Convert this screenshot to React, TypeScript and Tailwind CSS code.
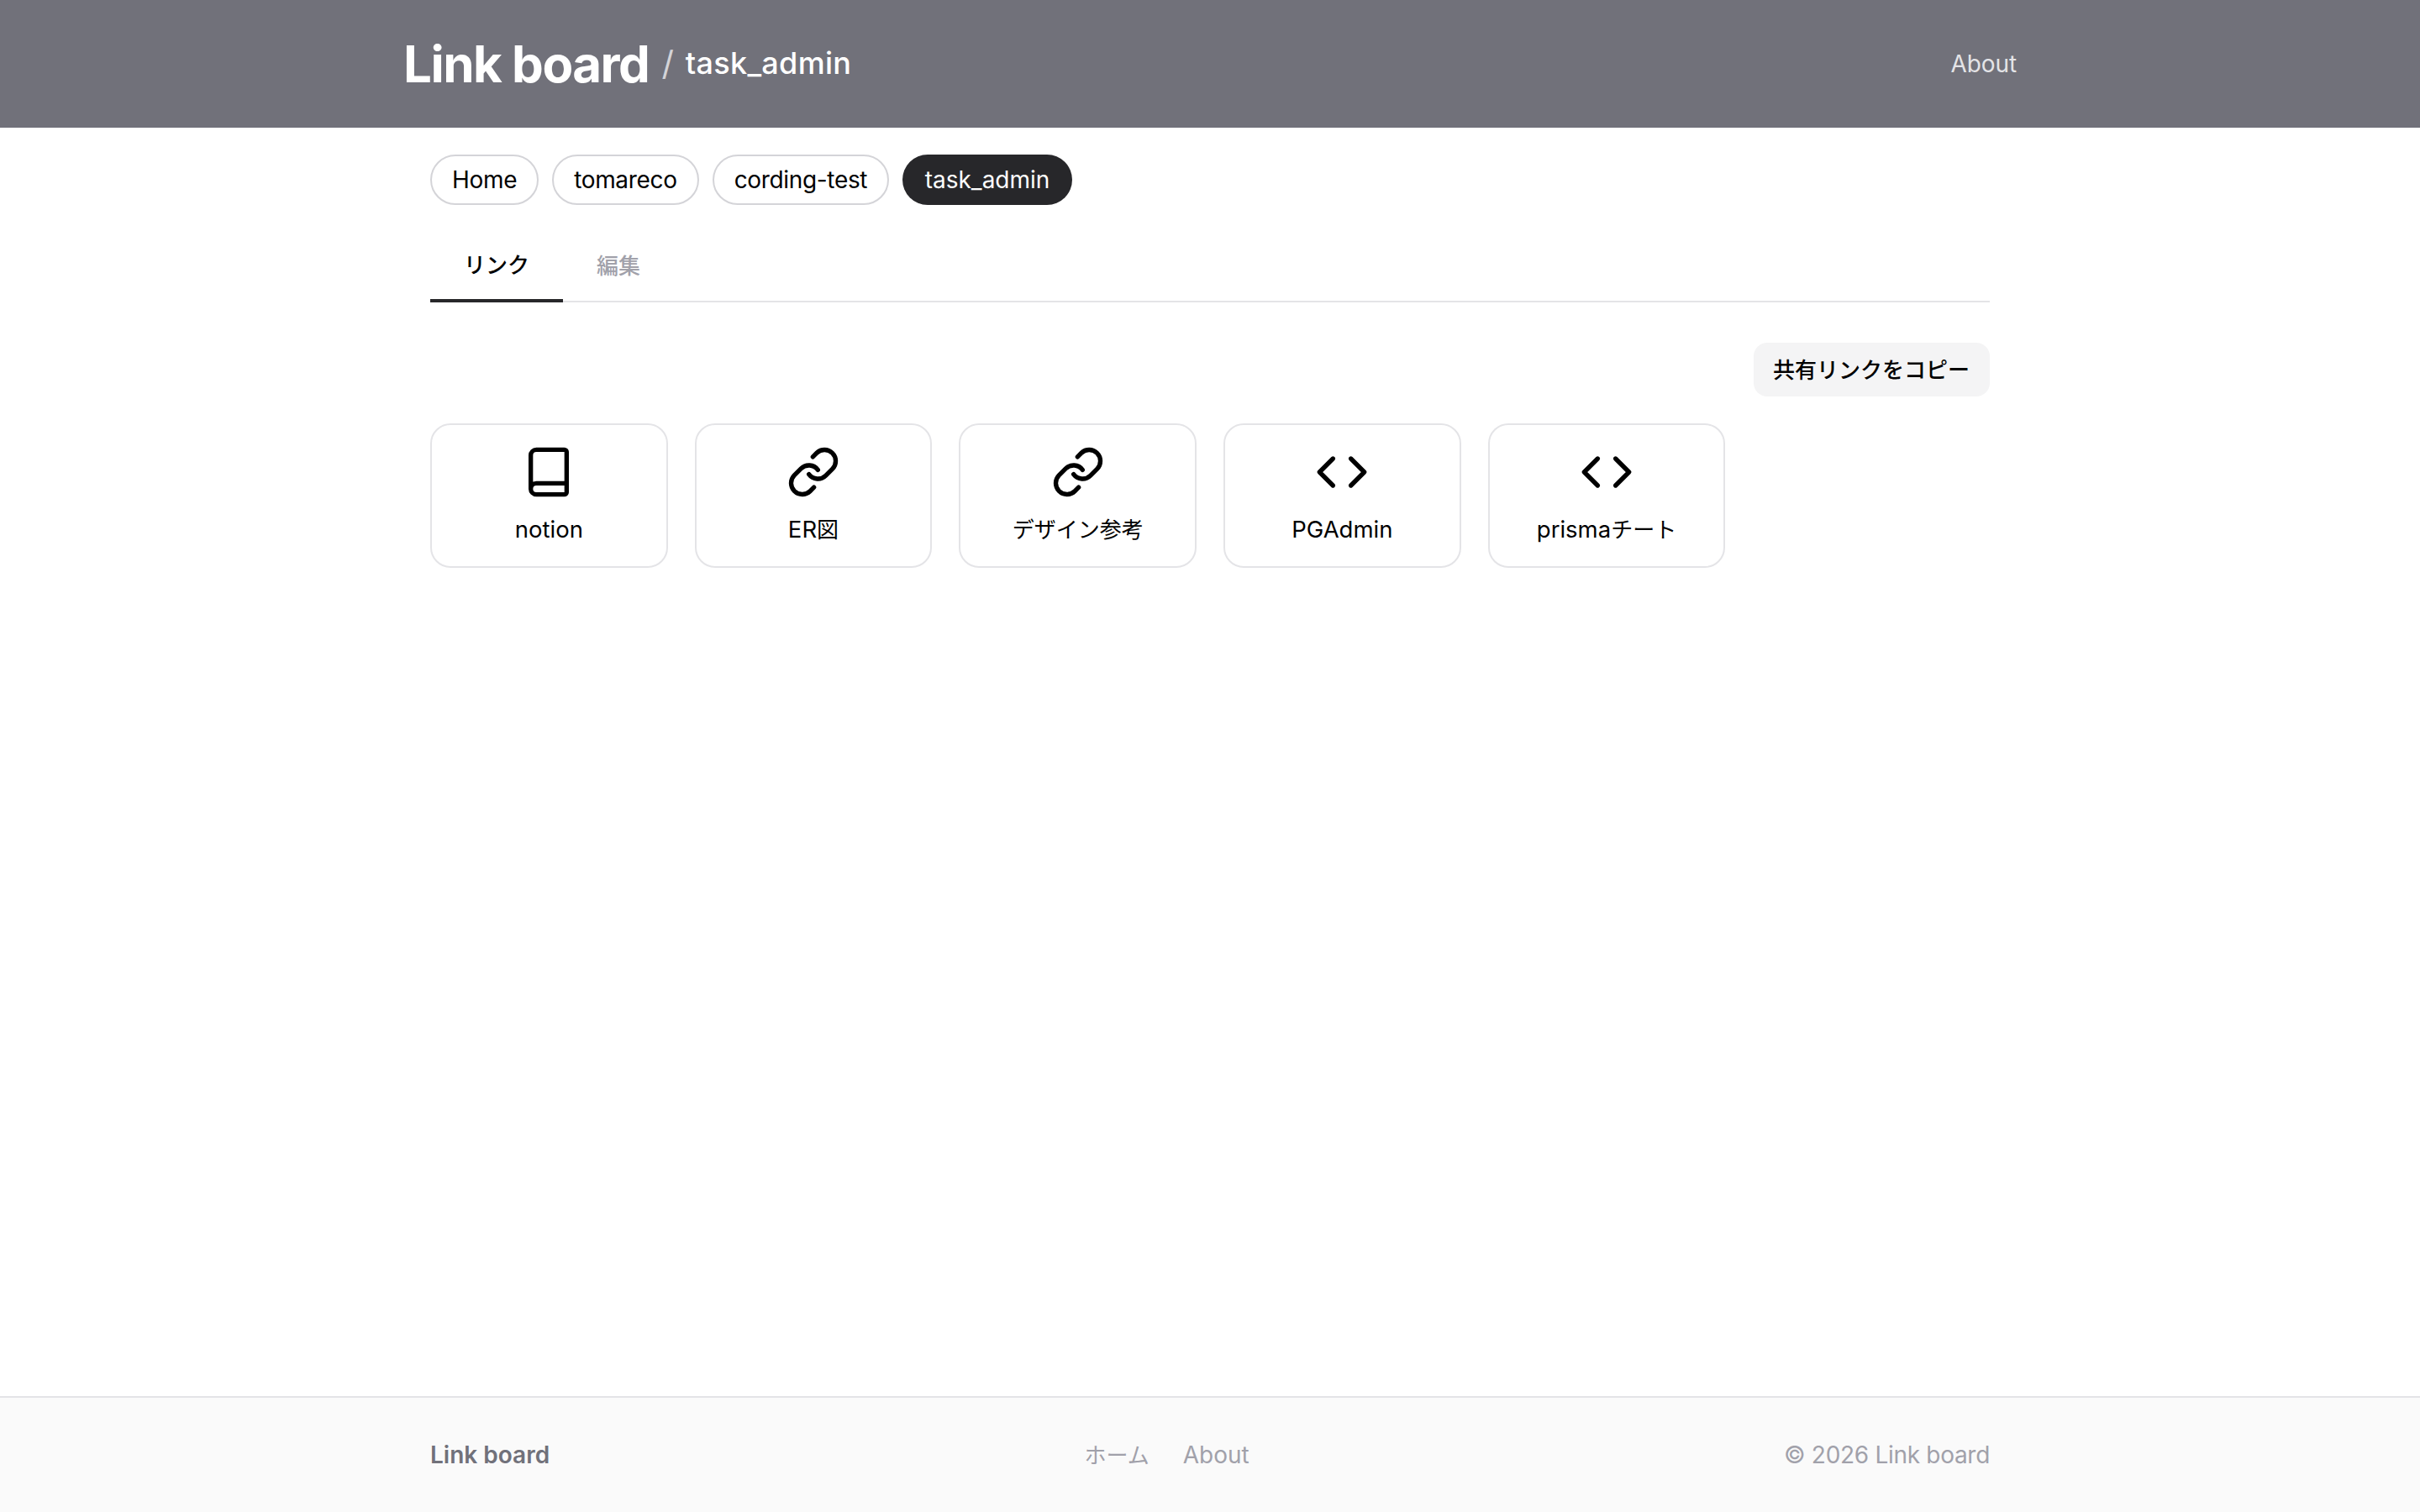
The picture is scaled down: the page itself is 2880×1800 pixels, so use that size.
import React from "react";
import { Book, Code, Link } from "lucide-react";

const crumbs = ["Home", "tomareco", "cording-test"];

const cards = [
  { icon: Book, label: "notion", jp: "" },
  { icon: Link, label: "ER", jp: "図" },
  { icon: Link, label: "", jp: "デザイン参考" },
  { icon: Code, label: "PGAdmin", jp: "" },
  { icon: Code, label: "prisma", jp: "チート" },
];

const App: React.FC = () => {
  return (
    <div className="flex min-h-screen flex-col bg-white font-['Inter','Noto_Sans_CJK_JP',sans-serif] text-black">
      <header className="h-[152px] bg-[#71717a] text-white">
        <div className="mx-auto flex h-full w-[1920px] items-center justify-between">
          <div className="flex items-center">
            <span className="text-[60px] leading-none font-bold tracking-[-1.5px]">Link board</span>
            <span className="ml-[15px] text-[40px] leading-none font-normal text-[#d4d4d8]">/</span>
            <span className="ml-[14px] -translate-y-px text-[36px] leading-none font-medium tracking-[0.3px]">task_admin</span>
          </div>
          <a className="text-[28px] tracking-[-0.1px] text-[#e4e4e7]">About</a>
        </div>
      </header>

      <main className="mx-auto w-[1920px] flex-1 px-8 pt-8">
        <nav className="flex gap-4">
          {crumbs.map((c) => (
            <a
              key={c}
              className="flex h-[60px] items-center rounded-full border-2 border-[#d4d4d8] px-6 text-[28px] tracking-[-0.33px]"
            >
              {c}
            </a>
          ))}
          <a className="flex h-[60px] items-center rounded-full bg-[#27272a] px-[26.5px] text-[28px] text-white">
            task_admin
          </a>
        </nav>

        <div className="mt-6 flex border-b-2 border-[#e4e4e7]">
          <button className="-mb-[2px] border-b-4 border-[#27272a] px-10 pt-7 pb-5 text-[26px] leading-10 font-medium">
            リンク
          </button>
          <button className="px-10 pt-7 pb-5 text-[26px] leading-10 font-medium text-[#a1a1aa]">
            編集
          </button>
        </div>

        <div className="mt-12 flex justify-end">
          <button className="flex h-16 items-center rounded-2xl bg-[#f4f4f5] pr-6 pl-[23px] text-[26px] font-medium">
            共有リンクをコピー
          </button>
        </div>

        <div className="mt-8 grid grid-cols-6 gap-8">
          {cards.map(({ icon: Icon, label, jp }) => (
            <a
              key={label + jp}
              className="flex h-[172px] flex-col items-center rounded-3xl border-2 border-[#e4e4e7] pt-6"
            >
              <Icon className="h-16 w-16" strokeWidth={2} />
              <span className="mt-4 text-[27.5px] leading-10">
                {label}
                <span className="text-[26px]">{jp}</span>
              </span>
            </a>
          ))}
        </div>
      </main>

      <footer className="h-[138px] border-t-2 border-[#e4e4e7] bg-[#fafafa]">
        <div className="mx-auto flex h-full w-[1920px] items-center justify-between px-8 text-[28px]">
          <span className="font-semibold text-[#71717a]">Link board</span>
          <div className="flex items-center gap-10 text-[#a1a1aa]">
            <a className="text-[26px]">ホーム</a>
            <a>About</a>
          </div>
          <span className="tracking-[-0.3px] text-[#a1a1aa]">© 2026 Link board</span>
        </div>
      </footer>
    </div>
  );
};

export default App;
